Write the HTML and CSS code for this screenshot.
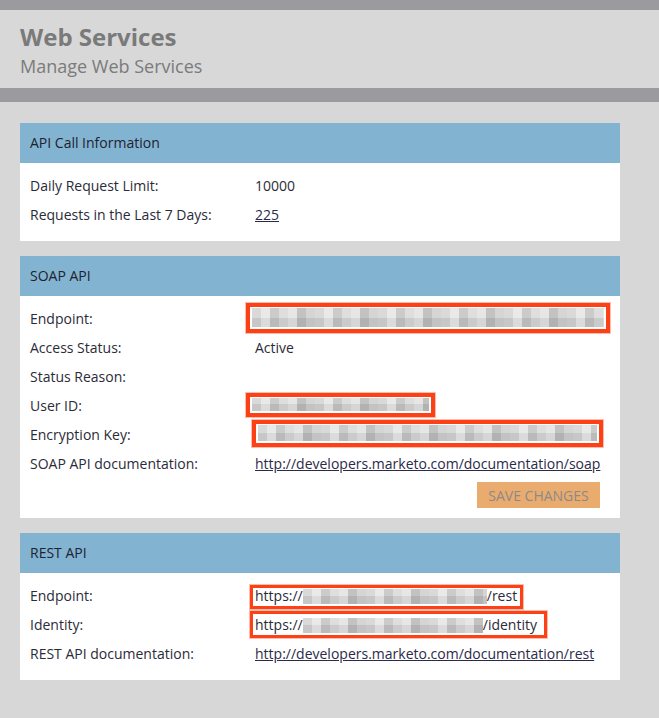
FILE: index.html
```html
<!DOCTYPE html>
<html>
<head>
<meta charset="utf-8">
<link rel="stylesheet" href="styles.css">
</head>
<body>
<div class="topbar"></div>
<header class="page-header">
  <h1 class="title">Web Services</h1>
  <div class="subtitle">Manage Web Services</div>
</header>
<div class="subbar"></div>

<main class="content">
  <section class="panel">
    <div class="panel-head">API Call Information</div>
    <div class="panel-body">
      <div class="row"><div class="label">Daily Request Limit:</div><div class="value">10000</div></div>
      <div class="row"><div class="label">Requests in the Last 7 Days:</div><div class="value"><a class="link" href="#">225</a></div></div>
    </div>
  </section>

  <section class="panel">
    <div class="panel-head">SOAP API</div>
    <div class="panel-body soap-body">
      <div class="row"><div class="label">Endpoint:</div><div class="value"><div class="redact box-soap-endpoint"><div class="mosaic"></div></div></div></div>
      <div class="row"><div class="label">Access Status:</div><div class="value">Active</div></div>
      <div class="row"><div class="label">Status Reason:</div><div class="value"></div></div>
      <div class="row"><div class="label">User ID:</div><div class="value"><div class="redact box-user"><div class="mosaic"></div></div></div></div>
      <div class="row"><div class="label">Encryption Key:</div><div class="value"><div class="redact box-key"><div class="mosaic"></div></div></div></div>
      <div class="row"><div class="label">SOAP API documentation:</div><div class="value"><a class="link" href="#">http://developers.marketo.com/documentation/soap</a></div></div>
      <div class="actions"><button class="btn-save">Save Changes</button></div>
    </div>
  </section>

  <section class="panel">
    <div class="panel-head">REST API</div>
    <div class="panel-body">
      <div class="row"><div class="label">Endpoint:</div><div class="value">https://<span class="mosaic-inline w-rest"></span>/rest<div class="redact thin box-rest"></div></div></div>
      <div class="row"><div class="label">Identity:</div><div class="value">https://<span class="mosaic-inline w-ident"></span>/identity<div class="redact thin box-ident"></div></div></div>
      <div class="row"><div class="label">REST API documentation:</div><div class="value"><a class="link" href="#">http://developers.marketo.com/documentation/rest</a></div></div>
    </div>
  </section>
</main>
</body>
</html>
```

FILE: styles.css
```css
html, body {
  margin: 0;
  padding: 0;
}
body {
  background: #d7d7d7;
  font-family: "Open Sans", "Noto Sans", sans-serif;
  color: #2b2b38;
  font-size: 14px;
  width: 659px;
  height: 718px;
  overflow: hidden;
}
.topbar {
  height: 10px;
  background: #9b9a9f;
}
.page-header {
  height: 78px;
  box-sizing: border-box;
  padding: 12px 20px 0;
  background: #d8d8d8;
}
.title {
  margin: 0;
  font-size: 24px;
  line-height: 29px;
  font-weight: 700;
  color: #7a7a7a;
}
.subtitle {
  margin-top: 4px;
  font-size: 18px;
  line-height: 22px;
  color: #7b7b7b;
}
.subbar {
  height: 14px;
  background: #9b9a9f;
}
.content {
  padding: 21px 39px 0 20px;
  display: flex;
  flex-direction: column;
  gap: 15px;
  width: 600px;
}
.panel {
  background: #fff;
}
.panel-head {
  height: 40px;
  line-height: 40px;
  background: #82b3d0;
  padding-left: 10px;
  color: #1f2230;
}
.panel-body {
  padding: 8px 10px 12px;
}
.soap-body {
  padding-bottom: 10px;
}
.row {
  display: flex;
  height: 29px;
  line-height: 29px;
}
.label {
  width: 225px;
  flex: none;
}
.value {
  position: relative;
  flex: 1;
  white-space: nowrap;
}
.link {
  color: #2b2b48;
  text-decoration: underline;
}
.actions {
  display: flex;
  justify-content: flex-end;
  margin-top: 4px;
  padding-right: 10px;
}
.btn-save {
  width: 123px;
  height: 26px;
  border: 0;
  padding: 0;
  background: #eaab6f;
  color: #8a8a8a;
  font-family: "Open Sans", "Noto Sans", sans-serif;
  font-size: 14px;
  text-transform: uppercase;
}

/* annotation overlays */
.redact {
  position: absolute;
  box-sizing: border-box;
  border: 4px solid #fd4116;
  box-shadow: 0 0 0 1px rgba(253, 65, 22, 0.35);
}
.redact.thin {
  border-width: 3px;
}
.mosaic, .mosaic-inline {
  background-image:
    repeating-linear-gradient(90deg,
      rgba(0,0,0,0.04) 0 9px,
      rgba(255,255,255,0.25) 9px 18px,
      rgba(0,0,0,0.10) 18px 27px,
      rgba(0,0,0,0.02) 27px 36px,
      rgba(255,255,255,0.15) 36px 45px,
      rgba(0,0,0,0.14) 45px 54px,
      rgba(0,0,0,0.06) 54px 63px),
    linear-gradient(#e2e2e2 50%, #cfcfcf 50%);
}
.mosaic {
  position: absolute;
  inset: 1px 2px 2px 2px;
}
.mosaic-inline {
  display: inline-block;
  height: 15px;
  vertical-align: -3px;
}
.w-rest { width: 184px; }
.w-ident { width: 180px; }

.box-soap-endpoint { left: -9px; top: -1px; width: 364px; height: 30px; }
.box-user { left: -9px; top: 2px; width: 189px; height: 24px; }
.box-key { left: -3px; top: 0; width: 351px; height: 27px; }
.box-rest { left: -5px; top: 4px; width: 273px; height: 24px; }
.box-ident { left: -5px; top: 1px; width: 297px; height: 27px; }
```
